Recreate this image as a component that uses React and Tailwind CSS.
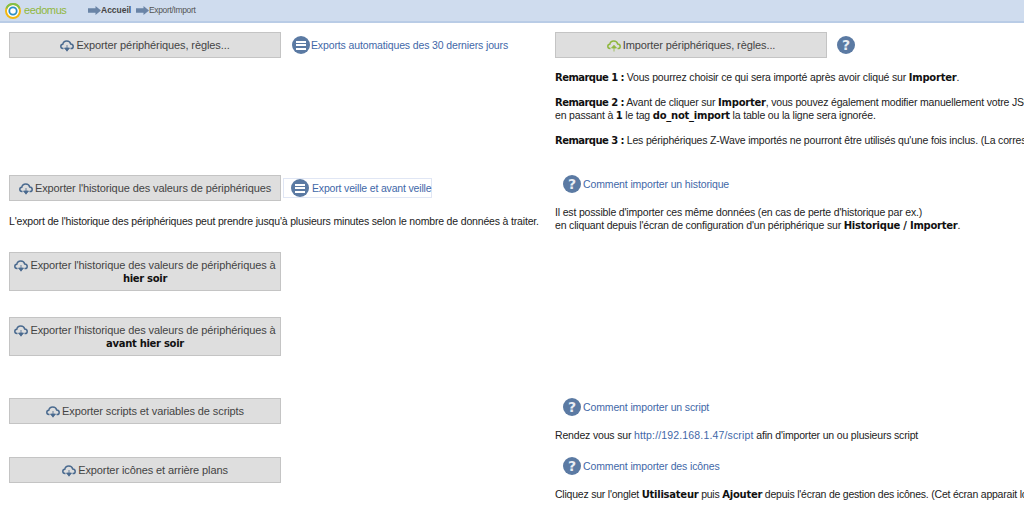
import React from "react";

const Cloud = ({ color = "#4a6a8f", up = false }) => (
  <svg width="14" height="12" viewBox="0 0 14 12" className="block" aria-hidden="true">
    <path d="M3.500 8.500H3C1.800 8.500 .8 7.600 .8 6.300c0-1.100.9-2 2-2.100C3.100 2.400 4.800 1 6.800 1c1.900 0 3.500 1.300 3.900 3 1.400.1 2.500 1.100 2.500 2.400 0 1.200-1 2.100-2.200 2.100H10.500" fill="none" stroke={color} strokeWidth="1.500" />
    {up ? (
      <path d="M7 11.500V8M4.500 8 7 5.200 9.500 8H4.500Z" fill={color} stroke={color} strokeWidth=".8" />
    ) : (
      <path d="M7 5v3.500M4.500 8 7 11.200 9.500 8H4.500Z" fill={color} stroke={color} strokeWidth=".8" />
    )}
  </svg>
);

const Arrow = () => (
  <svg width="13" height="9" viewBox="0 0 13 9" className="shrink-0" aria-hidden="true">
    <path d="M0 2.300h7.500V0L13 4.500 7.500 9V6.700H0Z" fill="#6a84a6" />
  </svg>
);

const MenuIcon = () => (
  <span className="w-[18px] h-[18px] rounded-full bg-[#5b7aa3] flex flex-col items-center justify-center gap-[1.500px] shrink-0">
    <span className="w-[10px] h-[2px] bg-white" />
    <span className="w-[10px] h-[2px] bg-white" />
    <span className="w-[10px] h-[2px] bg-white" />
  </span>
);

const HelpIcon = () => (
  <span className="w-[18px] h-[18px] rounded-full bg-[#5b7aa3] flex items-center justify-center shrink-0 text-[#e8edf4] text-[14px] font-bold leading-none tracking-normal font-['DejaVu_Sans',sans-serif]">?</span>
);

const Btn = ({ h = "h-[26px]", children, className = "" }) => (
  <div className={`w-[272px] ${h} bg-[#dedede] border border-[#c4c4c4] text-[#444] text-[11px] tracking-[-0.1px] leading-[13px] flex items-center justify-center text-center shrink-0 ${className}`}>
    <span>{children}</span>
  </div>
);

const Inline = ({ up }) => <span className="inline-block align-[-1px] -my-[2px] mr-[2px]"><Cloud up={up} color={up ? "#8fb73e" : "#4a6a8f"} /></span>;

const HelpLink = ({ children, className = "" }) => (
  <div className={`flex items-center gap-[2px] h-[18px] ml-[8px] text-[#3f68a8] tracking-[-0.13px] ${className}`}>
    <HelpIcon />
    <span>{children}</span>
  </div>
);

const B = ({ children }) => <b className="text-[10px] tracking-[-0.25px] font-['DejaVu_Sans',sans-serif] text-[#111]">{children}</b>;
const BN = ({ children }) => <b className="text-[10px] tracking-[-0.3px] font-['DejaVu_Sans',sans-serif] text-[#111]">{children}</b>;
const R = ({ children }) => <b className="text-[10px] tracking-[-0.55px] font-['DejaVu_Sans',sans-serif] text-[#111]">{children}</b>;

export default function App() {
  return (
    <div className="w-[1024px] h-[516px] overflow-hidden bg-white text-[#222] text-[10.500px] tracking-[-0.17px] leading-[13px] font-['Liberation_Sans',Arial,sans-serif]">
      <header className="h-[23px] bg-[#cfdcee] border-b-2 border-[#b9cce6] flex items-center">
        <svg width="16" height="16" viewBox="0 0 16 16" className="ml-[5px] shrink-0" aria-hidden="true">
          <circle cx="8" cy="8" r="7" fill="#fff" stroke="#f2b811" strokeWidth="2" />
          <path d="M1.500 5.500A7 7 0 0 1 14.500 5.500" fill="none" stroke="#7fbf4a" strokeWidth="2" />
          <circle cx="8" cy="8" r="3.700" fill="#fff" stroke="#2e8fc4" strokeWidth="1.800" />
        </svg>
        <span className="ml-[3px] text-[#8fb73e] text-[11px] tracking-[-0.4px] w-[43px]">eedomus</span>
        <span className="ml-[21px] flex items-center"><Arrow /></span>
        <span className="ml-[0px] font-bold text-[#444] text-[8.500px] tracking-normal w-[30px]">Accueil</span>
        <span className="ml-[5px] flex items-center"><Arrow /></span>
        <span className="ml-[0px] text-[#555] text-[8.500px] tracking-[-0.35px]">Export/Import</span>
      </header>

      <div className="flex">
        <div className="w-[555px] shrink-0 pl-[9px] pt-[9px]">
          <div className="flex items-center">
            <Btn><Inline />Exporter périphériques, règles...</Btn>
            <span className="ml-[11px]"><MenuIcon /></span>
            <span className="ml-[1px] text-[#3f68a8] tracking-[-0.13px]">Exports automatiques des 30 derniers jours</span>
          </div>

          <div className="flex items-center mt-[117px]">
            <Btn><Inline />Exporter l'historique des valeurs de périphériques</Btn>
            <div className="ml-[2px] h-[20px] flex items-center gap-[3px] pl-[7px] border border-[#e0e6f4] text-[#3f68a8]">
              <MenuIcon />
              <span>Export veille et avant veille</span>
            </div>
          </div>
          <p className="mt-[14px] whitespace-nowrap">L'export de l'historique des périphériques peut prendre jusqu'à plusieurs minutes selon le nombre de données à traiter.</p>

          <Btn h="h-[39px]" className="mt-[24px]"><Inline />Exporter l'historique des valeurs de périphériques à<br /><BN>hier soir</BN></Btn>
          <Btn h="h-[39px]" className="mt-[26px]"><Inline />Exporter l'historique des valeurs de périphériques à<br /><BN>avant hier soir</BN></Btn>
          <Btn className="mt-[42px]"><Inline />Exporter scripts et variables de scripts</Btn>
          <Btn className="mt-[33px]"><Inline />Exporter icônes et arrière plans</Btn>
        </div>

        <div className="flex-1 min-w-0 pt-[9px] whitespace-nowrap">
          <div className="flex items-center">
            <Btn><Inline up />Importer périphériques, règles...</Btn>
            <span className="ml-[10px]"><HelpIcon /></span>
          </div>
          <p className="mt-[13px]"><R>Remarque 1 :</R> Vous pourrez choisir ce qui sera importé après avoir cliqué sur <B>Importer</B>.</p>
          <p className="mt-[12px]"><R>Remarque 2 :</R> Avant de cliquer sur <B>Importer</B>, vous pouvez également modifier manuellement votre JSON<br />en passant à <B>1</B> le tag <B>do_not_import</B> la table ou la ligne sera ignorée.</p>
          <p className="mt-[12px]"><R>Remarque 3 :</R> Les périphériques Z-Wave importés ne pourront être utilisés qu'une fois inclus. (La correspondance</p>
          <HelpLink className="mt-[28px]">Comment importer un historique</HelpLink>
          <p className="mt-[13px]">Il est possible d'importer ces même données (en cas de perte d'historique par ex.)<br />en cliquant depuis l'écran de configuration d'un périphérique sur <B>Historique / Importer</B>.</p>
          <HelpLink className="mt-[166px]">Comment importer un script</HelpLink>
          <p className="mt-[13px]">Rendez vous sur <span className="text-[#3f68a8] tracking-[0.15px]">http://192.168.1.47/script</span> afin d'importer un ou plusieurs script</p>
          <HelpLink className="mt-[15px]">Comment importer des icônes</HelpLink>
          <p className="mt-[13px] tracking-[-0.22px]">Cliquez sur l'onglet <B>Utilisateur</B> puis <B>Ajouter</B> depuis l'écran de gestion des icônes. (Cet écran apparait lorsque</p>
        </div>
      </div>
    </div>
  );
}
